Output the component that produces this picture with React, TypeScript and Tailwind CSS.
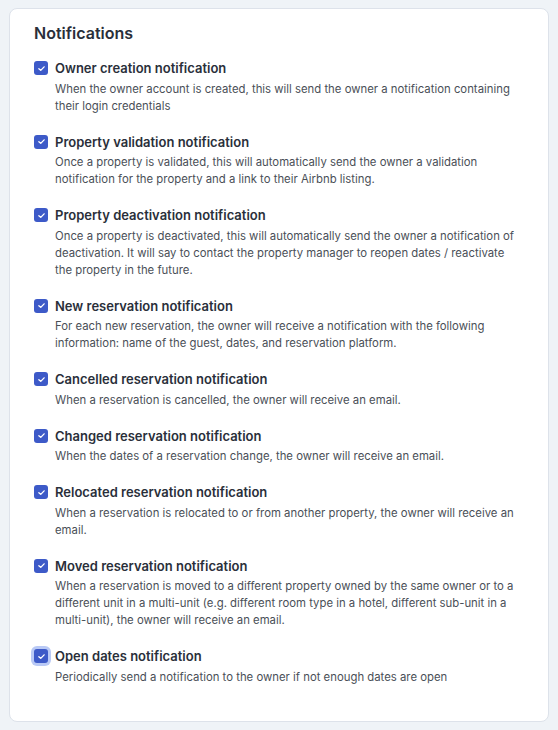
import { useState } from 'react';

type Item = { id: string; title: string; description: string };

const items: Item[] = [
  {
    id: 'owner-creation',
    title: 'Owner creation notification',
    description:
      'When the owner account is created, this will send the owner a notification containing their login credentials',
  },
  {
    id: 'property-validation',
    title: 'Property validation notification',
    description:
      'Once a property is validated, this will automatically send the owner a validation notification for the property and a link to their Airbnb listing.',
  },
  {
    id: 'property-deactivation',
    title: 'Property deactivation notification',
    description:
      'Once a property is deactivated, this will automatically send the owner a notification of deactivation. It will say to contact the property manager to reopen dates / reactivate the property in the future.',
  },
  {
    id: 'new-reservation',
    title: 'New reservation notification',
    description:
      'For each new reservation, the owner will receive a notification with the following information: name of the guest, dates, and reservation platform.',
  },
  {
    id: 'cancelled-reservation',
    title: 'Cancelled reservation notification',
    description: 'When a reservation is cancelled, the owner will receive an email.',
  },
  {
    id: 'changed-reservation',
    title: 'Changed reservation notification',
    description: 'When the dates of a reservation change, the owner will receive an email.',
  },
  {
    id: 'relocated-reservation',
    title: 'Relocated reservation notification',
    description:
      'When a reservation is relocated to or from another property, the owner will receive an email.',
  },
  {
    id: 'moved-reservation',
    title: 'Moved reservation notification',
    description:
      'When a reservation is moved to a different property owned by the same owner or to a different unit in a multi-unit (e.g. different room type in a hotel, different sub-unit in a multi-unit), the owner will receive an email.',
  },
  {
    id: 'open-dates',
    title: 'Open dates notification',
    description: 'Periodically send a notification to the owner if not enough dates are open',
  },
];

function Checkbox({ checked, focused, onChange }: { checked: boolean; focused?: boolean; onChange: () => void }) {
  return (
    <button
      type="button"
      onClick={onChange}
      className={`flex h-[14px] w-[14px] shrink-0 items-center justify-center rounded-[3px] ${
        checked ? 'bg-[#3d5ac8]' : 'border border-gray-300 bg-white'
      } ${focused ? 'ring-[3px] ring-[#b9c9f5]' : ''}`}
    >
      {checked && (
        <svg viewBox="0 0 12 12" className="h-[9px] w-[9px]" fill="none">
          <path d="M2.5 6.2 5 8.5 9.5 3.8" stroke="white" strokeWidth="1.8" strokeLinecap="round" strokeLinejoin="round" />
        </svg>
      )}
    </button>
  );
}

export default function App() {
  const [enabled, setEnabled] = useState<Record<string, boolean>>(
    Object.fromEntries(items.map((i) => [i.id, true]))
  );

  return (
    <div className="min-h-[730px] bg-[#eff3f7] px-[9px] pt-[8px] pb-[9px] font-['Inter',sans-serif]">
      <div className="rounded-lg border border-[#dde2ea] bg-white px-6 pt-[12px] pb-[35px]">
        <h2 className="text-[16px] font-semibold leading-6 text-[#2a2f3a]">Notifications</h2>
        <div className="mt-[13px] flex flex-col gap-[17px]">
          {items.map((item, idx) => (
            <div key={item.id}>
              <div className="flex items-center gap-[7px]">
                <Checkbox
                  checked={enabled[item.id]}
                  focused={idx === items.length - 1}
                  onChange={() => setEnabled((s) => ({ ...s, [item.id]: !s[item.id] }))}
                />
                <span className="text-[13px] font-semibold leading-5 text-[#2a2f3a]">{item.title}</span>
              </div>
              <p className="mt-[2.5px] pl-[21px] text-[11.35px] leading-[17px] text-[#4a4f57]">{item.description}</p>
            </div>
          ))}
        </div>
      </div>
    </div>
  );
}
